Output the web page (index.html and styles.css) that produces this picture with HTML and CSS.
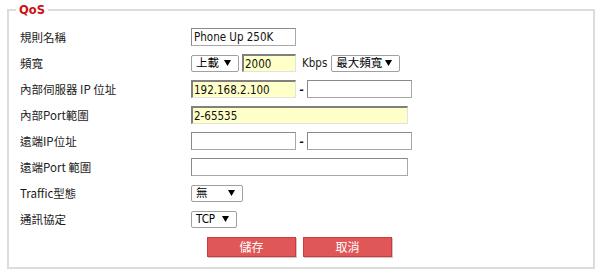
FILE: index.html
```html
<!DOCTYPE html>
<html lang="zh-Hant">
<head>
<meta charset="utf-8">
<title>QoS</title>
<link rel="stylesheet" href="styles.css">
</head>
<body>
<fieldset class="box">
  <legend class="title">QoS</legend>
  <div class="form">
    <div class="row">
      <div class="label">規則名稱</div>
      <div class="ctrl"><span class="input w105">Phone Up 250K</span></div>
    </div>
    <div class="row">
      <div class="label">頻寬</div>
      <div class="ctrl">
        <span class="select w48"><span class="stext">上載</span><svg class="arrow" viewBox="0 0 7 6" width="7" height="6"><path d="M0 0H7L3.5 6Z"/></svg></span>
        <span class="input yellow w54">2000</span>
        <span class="unit">Kbps</span>
        <span class="select w69"><span class="stext">最大頻寬</span><svg class="arrow" viewBox="0 0 7 6" width="7" height="6"><path d="M0 0H7L3.5 6Z"/></svg></span>
      </div>
    </div>
    <div class="row">
      <div class="label">內部伺服器 IP 位址</div>
      <div class="ctrl">
        <span class="input yellow w105">192.168.2.100</span>
        <span class="dash">-</span>
        <span class="input w105"></span>
      </div>
    </div>
    <div class="row">
      <div class="label">內部Port範圍</div>
      <div class="ctrl"><span class="input yellow w217">2-65535</span></div>
    </div>
    <div class="row">
      <div class="label">遠端IP位址</div>
      <div class="ctrl">
        <span class="input w105"></span>
        <span class="dash">-</span>
        <span class="input w105"></span>
      </div>
    </div>
    <div class="row">
      <div class="label">遠端Port 範圍</div>
      <div class="ctrl"><span class="input w217"></span></div>
    </div>
    <div class="row">
      <div class="label">Traffic型態</div>
      <div class="ctrl">
        <span class="select w52"><span class="stext">無</span><svg class="arrow" viewBox="0 0 7 6" width="7" height="6"><path d="M0 0H7L3.5 6Z"/></svg></span>
      </div>
    </div>
    <div class="row">
      <div class="label">通訊協定</div>
      <div class="ctrl">
        <span class="select w46"><span class="stext">TCP</span><svg class="arrow" viewBox="0 0 7 6" width="7" height="6"><path d="M0 0H7L3.5 6Z"/></svg></span>
      </div>
    </div>
    <div class="buttons">
      <button class="btn" type="button">儲存</button>
      <button class="btn" type="button">取消</button>
    </div>
  </div>
</fieldset>
</body>
</html>
```

FILE: styles.css
```css
html, body {
  margin: 0;
  padding: 0;
  background: #ffffff;
}

body {
  font-family: "Noto Sans CJK TC", "Noto Sans", sans-serif;
  font-size: 11px;
  color: #111;
}

.box {
  box-sizing: border-box;
  width: 588px;
  margin: 2px 0 0 7px;
  padding: 0 0 10px 0;
  border: 2px solid #dcdcdc;
  min-width: 0;
}

.title {
  margin-left: 7px;
  padding: 0 3px;
  font-family: "DejaVu Sans", "Liberation Sans", sans-serif;
  font-weight: bold;
  font-size: 11.5px;
  line-height: 16px;
  color: #cc1111;
}

.form {
  padding: 6px 0 0 11px;
}

.row {
  display: flex;
  align-items: center;
  height: 26px;
}

.label {
  width: 171px;
  flex: none;
  font-size: 11.5px;
  line-height: 14px;
  color: #1a1a1a;
}

.ctrl {
  display: flex;
  align-items: center;
}

.input {
  box-sizing: border-box;
  display: flex;
  align-items: center;
  height: 18px;
  padding: 0 2px;
  background: #fff;
  border: 1px solid #a8a8a8;
  border-top-color: #8a8a8a;
  border-left-color: #8a8a8a;
  font-family: "DejaVu Sans Condensed", "DejaVu Sans", sans-serif;
  font-size: 11.5px;
  color: #111;
  white-space: nowrap;
}

.input.yellow {
  background: #ffffc8;
  border-top: 2px solid #808080;
  border-left: 2px solid #808080;
  border-right: 1px solid #e2e2e2;
  border-bottom: 1px solid #e2e2e2;
  padding-left: 1px;
}

.w105 { width: 105px; }
.w54 { width: 54px; margin-left: 3px; }
.w217 { width: 217px; }
.w48 { width: 48px; }
.w52 { width: 52px; }
.w46 { width: 46px; }
.w69 { width: 69px; }

.unit {
  margin: 0 4px 0 6px;
  font-family: "DejaVu Sans Condensed", "DejaVu Sans", sans-serif;
  font-size: 11.5px;
  color: #222;
}

.dash {
  width: 11px;
  text-align: center;
  font-family: "DejaVu Sans", sans-serif;
  font-size: 11px;
  font-weight: bold;
}

.select {
  box-sizing: border-box;
  display: flex;
  align-items: center;
  justify-content: space-between;
  height: 17px;
  padding: 0 7px 0 4px;
  background: #fff;
  border: 1px solid #a0a0a0;
  border-radius: 2px;
  font-size: 11.5px;
  color: #000;
}

.stext {
  font-family: "DejaVu Sans Condensed", "Noto Sans CJK TC", sans-serif;
  line-height: 14px;
}

.arrow {
  display: block;
  fill: #000;
}

.buttons {
  display: flex;
  gap: 7px;
  margin: 5px 0 0 187px;
}

.btn {
  box-sizing: border-box;
  width: 89px;
  height: 20px;
  padding: 0;
  background: #e05757;
  border: 1px solid #d23a3a;
  box-shadow: 1px 1px 0 #c8c8c8;
  color: #fff;
  font-family: "Noto Sans CJK TC", sans-serif;
  font-size: 12px;
  line-height: 16px;
}
```
